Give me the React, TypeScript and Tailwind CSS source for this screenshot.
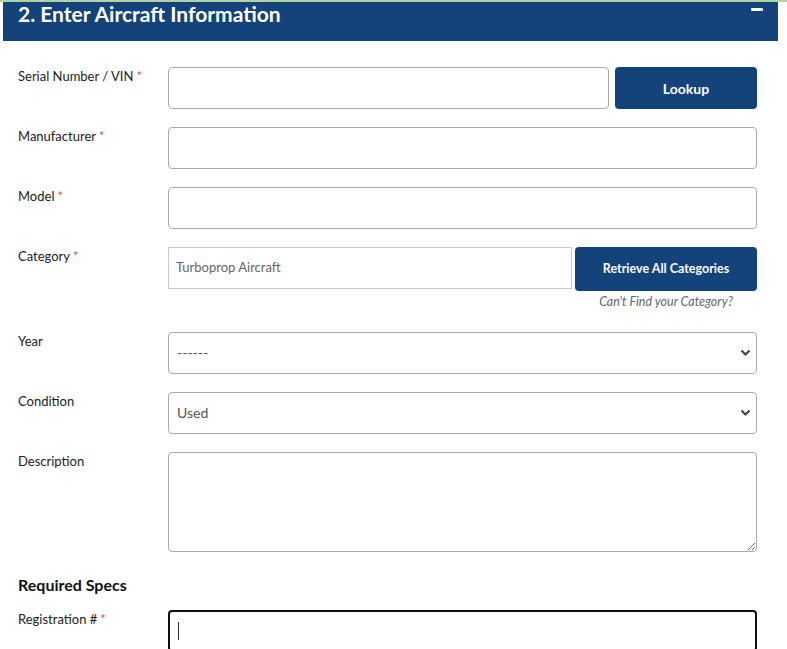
import { useState } from "react";

const Req = () => <span className="text-[#d9534f] ml-[3px]">*</span>;

const Label = ({ children }: { children: React.ReactNode }) => (
  <label className="w-[150px] shrink-0 pt-[1px] leading-[16px] text-[13px] text-[#222]">{children}</label>
);

const inputCls =
  "w-full h-[42px] px-[8px] border border-[#aaa] rounded-[4px] bg-white text-[14px] text-[#555] outline-none";

const Chevron = () => (
  <svg width="11" height="8" viewBox="0 0 11 8" className="absolute right-[6px] top-[17px]">
    <path d="M1.5 1.5 L5.5 5.5 L9.5 1.5" stroke="#444" strokeWidth="2.2" fill="none" />
  </svg>
);

export default function App() {
  const [form, setForm] = useState({
    serial: "",
    manufacturer: "",
    model: "",
    year: "------",
    condition: "Used",
    description: "",
    registration: "",
  });

  const set = (name: string) => (e: React.ChangeEvent<HTMLInputElement | HTMLTextAreaElement>) =>
    setForm((prev) => ({ ...prev, [name]: e.target.value }));

  return (
    <div className="min-h-screen bg-white border-t-2 border-[#b4d3a5] font-['Lato','Liberation_Sans',sans-serif]">
      <div className="ml-[3px] w-[775px]">
        {/* header */}
        <div className="h-[39px] bg-[#14427b] flex items-start justify-between pl-[15px] pr-[15px]">
          <h2 className="text-white font-bold text-[21px] leading-none mt-[1px]">2. Enter Aircraft Information</h2>
          <div className="w-[12px] h-[3px] bg-white rounded-[1px] mt-[6px]" />
        </div>

        <div className="pl-[15px] pr-[21px] pt-[26px] flex flex-col">
          <div className="flex">
            <Label>
              Serial Number / VIN<Req />
            </Label>
            <div className="flex-1 flex gap-[6px]">
              <input className={inputCls} value={form.serial} onChange={set("serial")} />
              <button className="w-[142px] shrink-0 h-[42px] rounded-[4px] bg-[#14427b] text-white font-bold text-[14px]">
                Lookup
              </button>
            </div>
          </div>

          <div className="flex mt-[18px]">
            <Label>
              Manufacturer<Req />
            </Label>
            <input className={inputCls} value={form.manufacturer} onChange={set("manufacturer")} />
          </div>

          <div className="flex mt-[18px]">
            <Label>
              Model<Req />
            </Label>
            <input className={inputCls} value={form.model} onChange={set("model")} />
          </div>

          <div className="flex mt-[18px]">
            <Label>
              Category<Req />
            </Label>
            <div className="flex-1 flex gap-[3px]">
              <div className="flex-1 h-[42px] border border-[#ccc] px-[7px] flex items-center text-[13px] text-[#666]">
                Turboprop Aircraft
              </div>
              <div className="w-[182px] shrink-0 flex flex-col items-center">
                <button className="w-full h-[44px] rounded-[4px] bg-[#14427b] text-white font-bold text-[12.5px]">
                  Retrieve All Categories
                </button>
                <span className="mt-[2px] text-[12.5px] italic text-[#666]">Can't Find your Category?</span>
              </div>
            </div>
          </div>

          <div className="flex mt-[20px]">
            <Label>Year</Label>
            <div className="relative flex-1">
              <div className={inputCls + " flex items-center"}>{form.year}</div>
              <Chevron />
            </div>
          </div>

          <div className="flex mt-[18px]">
            <Label>Condition</Label>
            <div className="relative flex-1">
              <div className={inputCls + " flex items-center"}>{form.condition}</div>
              <Chevron />
            </div>
          </div>

          <div className="flex mt-[18px]">
            <Label>Description</Label>
            <textarea
              className="w-full h-[100px] px-[8px] py-[6px] border border-[#aaa] rounded-[4px] text-[14px] outline-none"
              value={form.description}
              onChange={set("description")}
            />
          </div>

          <h3 className="mt-[21px] text-[16px] font-bold text-[#111]">Required Specs</h3>

          <div className="flex mt-[13px]">
            <Label>
              Registration #<Req />
            </Label>
            <div className="flex-1 h-[42px] border-2 border-[#111] rounded-[4px] px-[8px] flex items-center">
              <span className="w-px h-[18px] bg-[#333]" />
            </div>
          </div>
        </div>
      </div>
    </div>
  );
}
